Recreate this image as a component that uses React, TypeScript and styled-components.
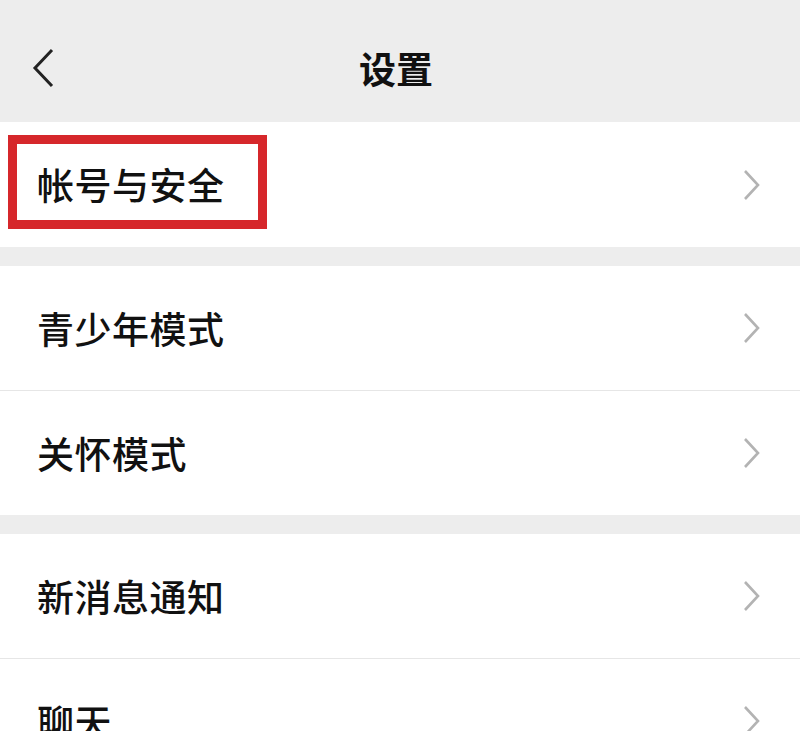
import React from "react";
import styled, { createGlobalStyle } from "styled-components";

const Global = createGlobalStyle`
  html, body { margin: 0; padding: 0; background: #ededed; }
  body { font-family: "Noto Sans CJK SC", "Noto Sans", sans-serif; }
`;

const Page = styled.div`
  width: 800px;
  height: 731px;
  overflow: hidden;
  background: #ededed;
  display: flex;
  flex-direction: column;
`;

const Header = styled.div`
  height: 122px;
  box-sizing: border-box;
  padding: 14px 8px 0 0;
  flex-shrink: 0;
  position: relative;
  display: flex;
  align-items: center;
  justify-content: center;
`;

const BackButton = styled.div`
  position: absolute;
  left: 30px;
  top: 48px;
  width: 26px;
  height: 40px;
  display: flex;
`;

const Title = styled.h1`
  margin: 0;
  font-size: 37px;
  font-weight: 700;
  color: #111;
  line-height: 1;
`;

const Group = styled.div<{ $gapTop: number }>`
  margin-top: ${(p) => p.$gapTop}px;
  background: #fff;
  display: flex;
  flex-direction: column;
  flex-shrink: 0;
`;

const Row = styled.div<{ $h: number }>`
  position: relative;
  height: ${(p) => p.$h}px;
  display: flex;
  align-items: center;
  justify-content: space-between;
  padding: 0 38px 0 37px;
  & + & {
    border-top: 1px solid #e6e6e6;
  }
`;

const Label = styled.span`
  font-size: 37px;
  font-weight: 500;
  color: #111;
  line-height: 1;
  letter-spacing: 0.5px;
`;

const Highlight = styled.div`
  position: absolute;
  left: 8px;
  top: 13px;
  width: 259px;
  height: 94px;
  box-sizing: border-box;
  border: 9px solid #d6272b;
  pointer-events: none;
`;

const Chevron = () => (
  <svg width="20" height="32" viewBox="0 0 20 32">
    <path d="M3 2 L16 16 L3 30" fill="none" stroke="#b3b3b3" strokeWidth="2.6" />
  </svg>
);

const BackChevron = () => (
  <svg width="26" height="40" viewBox="0 0 26 40">
    <path d="M22 2 L5 20 L22 38" fill="none" stroke="#222" strokeWidth="3" />
  </svg>
);

export default function App() {
  return (
    <Page>
      <Global />
      <Header>
        <BackButton>
          <BackChevron />
        </BackButton>
        <Title>设置</Title>
      </Header>
      <Group $gapTop={0}>
        <Row $h={125}>
          <Label>帐号与安全</Label>
          <Chevron />
          <Highlight />
        </Row>
      </Group>
      <Group $gapTop={19}>
        <Row $h={124}>
          <Label>青少年模式</Label>
          <Chevron />
        </Row>
        <Row $h={124}>
          <Label>关怀模式</Label>
          <Chevron />
        </Row>
      </Group>
      <Group $gapTop={19}>
        <Row $h={124}>
          <Label>新消息通知</Label>
          <Chevron />
        </Row>
        <Row $h={124}>
          <Label>聊天</Label>
          <Chevron />
        </Row>
      </Group>
    </Page>
  );
}
